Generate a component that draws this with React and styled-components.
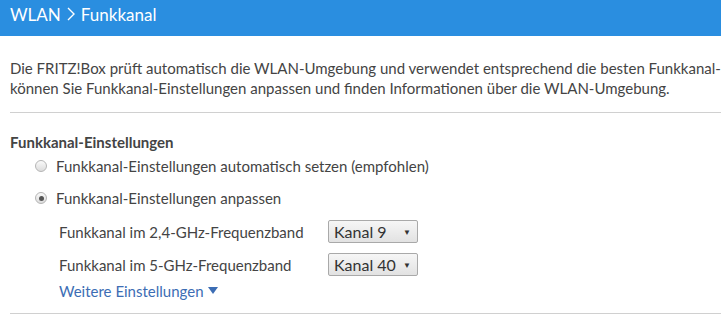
import React from 'react';
import styled, { createGlobalStyle } from 'styled-components';

const GlobalStyle = createGlobalStyle`
  html, body {
    margin: 0;
    padding: 0;
    background: #fff;
    overflow: hidden;
  }
  body {
    font-family: "Lato", "Open Sans", sans-serif;
    color: #444;
  }
`;

const Page = styled.div`
  width: 721px;
  height: 316px;
  overflow: hidden;
`;

const Header = styled.div`
  height: 36px;
  background: #2a8ee0;
  color: #fff;
  display: flex;
  align-items: center;
  gap: 5px;
  padding: 0 10px 8px;
  box-sizing: border-box;
  font-size: 17px;
`;

const Content = styled.div`
  padding: 0 10px;
`;

const Intro = styled.p`
  margin: 0 -10px 0 0;
  padding: 22px 0 14px;
  font-size: 15px;
  line-height: 20px;
  white-space: nowrap;
  overflow: hidden;
  border-bottom: 1px solid #d0d0d0;
`;

const Section = styled.div`
  padding: 21px 0 13px;
  border-bottom: 1px solid #d0d0d0;
  margin-right: -10px;
`;

const SectionTitle = styled.h3`
  margin: 0;
  font-size: 15px;
  font-weight: 700;
  line-height: 16px;
`;

const RadioRow = styled.label`
  display: flex;
  align-items: center;
  gap: 9px;
  padding-left: 25px;
  height: 32px;
  font-size: 15px;
`;

const Radio = styled.span`
  width: 12px;
  height: 12px;
  border-radius: 50%;
  box-sizing: border-box;
  border: 1px solid #b5b5b5;
  background: linear-gradient(#fafafa, #dcdcdc);
  display: flex;
  align-items: center;
  justify-content: center;

  &::after {
    content: '';
    width: 5px;
    height: 5px;
    border-radius: 50%;
    background: ${p => (p.$checked ? '#555' : 'transparent')};
  }
`;

const Fields = styled.div`
  padding-left: 49px;
  padding-top: 1px;
`;

const FieldRow = styled.div`
  display: grid;
  grid-template-columns: 269px 90px;
  align-items: center;
  height: 33px;
  font-size: 15px;
`;

const Select = styled.div`
  height: 23px;
  box-sizing: border-box;
  border: 1px solid #a9a9a9;
  border-radius: 2px;
  background: linear-gradient(#f6f6f6, #e2e2e2);
  display: flex;
  align-items: center;
  justify-content: space-between;
  padding: 0 6px 0 5px;
  font-size: 16px;
  color: #333;
`;

const Caret = styled.span`
  font-size: 8px;
  color: #333;
`;

const MoreLink = styled.a`
  display: inline-flex;
  align-items: center;
  gap: 4px;
  line-height: 18px;
  font-size: 15px;
  color: #3c6db4;
  text-decoration: none;
  cursor: pointer;
`;

function Chevron() {
  return (
    <svg width="10" height="16" viewBox="0 0 10 16">
      <path d="M2 2 L8 8 L2 14" fill="none" stroke="#fff" strokeWidth="1.4" />
    </svg>
  );
}

function TriangleDown() {
  return (
    <svg width="10" height="8" viewBox="0 0 10 8">
      <path d="M0 0 H10 L5 7 Z" fill="#3c6db4" />
    </svg>
  );
}

export default function App() {
  return (
    <Page>
      <GlobalStyle />
      <Header>
        <span>WLAN</span>
        <Chevron />
        <span>Funkkanal</span>
      </Header>
      <Content>
        <Intro>
          Die FRITZ!Box prüft automatisch die WLAN-Umgebung und verwendet entsprechend die besten Funkkanal-Einstellungen. Hier
          <br />
          können Sie Funkkanal-Einstellungen anpassen und finden Informationen über die WLAN-Umgebung.
        </Intro>
        <Section>
          <SectionTitle>Funkkanal-Einstellungen</SectionTitle>
          <RadioRow>
            <Radio />
            Funkkanal-Einstellungen automatisch setzen (empfohlen)
          </RadioRow>
          <RadioRow>
            <Radio $checked />
            Funkkanal-Einstellungen anpassen
          </RadioRow>
          <Fields>
            <FieldRow>
              <span>Funkkanal im 2,4-GHz-Frequenzband</span>
              <Select>
                Kanal 9<Caret>▼</Caret>
              </Select>
            </FieldRow>
            <FieldRow>
              <span>Funkkanal im 5-GHz-Frequenzband</span>
              <Select>
                Kanal 40<Caret>▼</Caret>
              </Select>
            </FieldRow>
            <MoreLink>
              Weitere Einstellungen
              <TriangleDown />
            </MoreLink>
          </Fields>
        </Section>
      </Content>
    </Page>
  );
}
